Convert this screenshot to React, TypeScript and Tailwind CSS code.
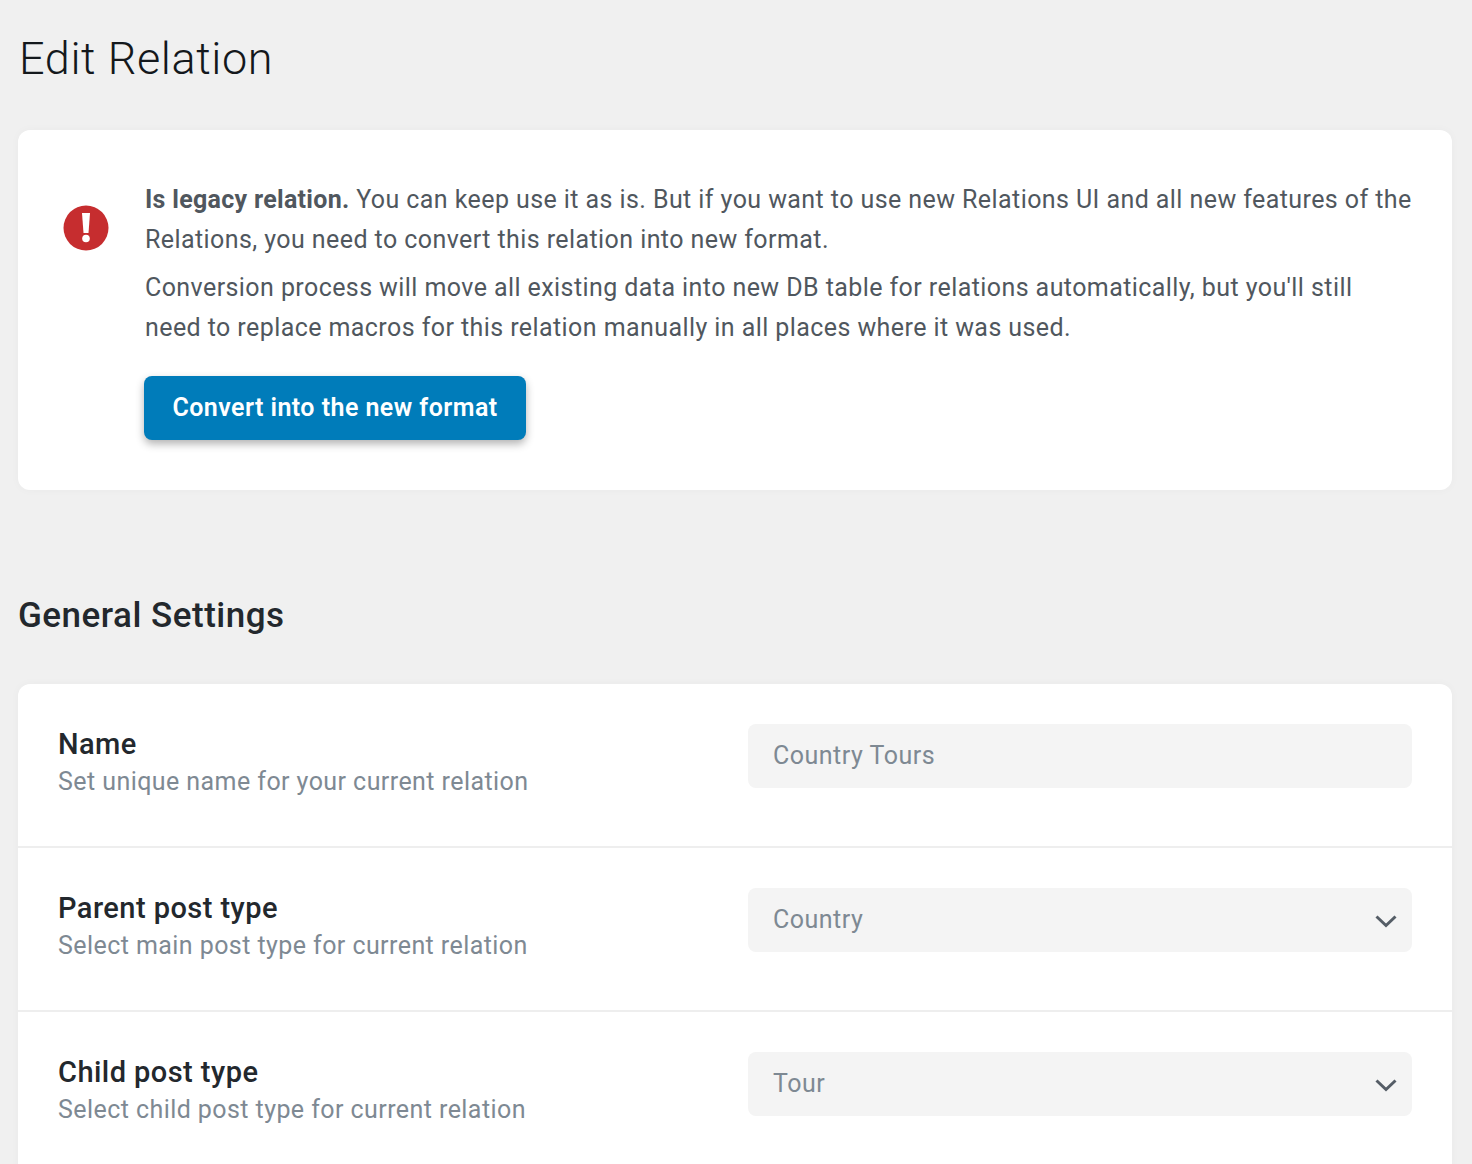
import React from 'react';

const Chevron = () => (
  <svg viewBox="0 0 22 13" className="absolute right-[15px] top-[27px] w-[22px] h-[13px]">
    <polyline points="1.5,1.5 11,10.5 20.5,1.5" fill="none" stroke="#555d66" strokeWidth="3" />
  </svg>
);

const Row = ({ title, desc, value, select, last }: { title: string; desc: string; value: string; select?: boolean; last?: boolean }) => (
  <div className={`flex justify-between pl-10 pr-10 pt-10 h-[164px] ${last ? '' : 'border-b-2 border-[#eeeeee]'}`}>
    <div className="w-[600px] pt-px">
      <div className="text-[29px] leading-[38px] font-medium tracking-[0.45px] text-[#23282d]">{title}</div>
      <div className="text-[25px] leading-[38px] tracking-[0.43px] text-[#7e8993]">{desc}</div>
    </div>
    <div className="relative w-[664px] h-16 bg-[#f4f4f4] rounded-lg flex items-center pl-[25px] pr-6 text-[25px] tracking-[0.5px] text-[#7e8993]">
      {value}
      {select && <Chevron />}
    </div>
  </div>
);

export default function App() {
  return (
    <div className="h-[1164px] overflow-hidden bg-[#f0f0f0] pl-[18px] pr-5 font-['Roboto',sans-serif]">
      <h1 className="pt-[30px] pl-px text-[45px] leading-[58px] font-light tracking-[0.6px] text-[#14181c]">Edit Relation</h1>
      <div className="mt-[42px] h-[360px] bg-white rounded-xl shadow-[0_0_10px_rgba(0,0,0,0.03)] flex pl-[45px] pr-10 pt-[49px]">
        <svg viewBox="0 0 46 46" className="w-[46px] h-[46px] mt-[26px] shrink-0">
          <circle cx="23" cy="23" r="22.5" fill="#c62d2f" />
          <path d="M19 8 H27 L25.5 28 H20.5 Z" fill="#fff" />
          <circle cx="23" cy="33.5" r="3.8" fill="#fff" />
        </svg>
        <div className="ml-9 pt-px text-[25px] leading-10 tracking-[0.42px] text-[#50575e]">
          <p><b className="font-bold tracking-[0.3px]">Is legacy relation.</b> You can keep use it as is. But if you want to use new Relations UI and all new features of the Relations, you need to convert this relation into new format.</p>
          <p className="mt-2">Conversion process will move all existing data into new DB table for relations automatically, but you'll still need to replace macros for this relation manually in all places where it was used.</p>
          <button className="-ml-px mt-7 block w-[382px] h-16 rounded-lg bg-[#007cba] text-white text-[25px] font-semibold tracking-[0.45px] shadow-[0_4px_8px_rgba(0,0,0,0.3)]">Convert into the new format</button>
        </div>
      </div>
      <h2 className="mt-[101px] text-[35px] leading-[50px] font-medium tracking-[0.5px] text-[#23282d]">General Settings</h2>
      <div className="mt-[43px] bg-white rounded-xl shadow-[0_0_10px_rgba(0,0,0,0.03)]">
        <Row title="Name" desc="Set unique name for your current relation" value="Country Tours" />
        <Row title="Parent post type" desc="Select main post type for current relation" value="Country" select />
        <Row title="Child post type" desc="Select child post type for current relation" value="Tour" select last />
      </div>
    </div>
  );
}
